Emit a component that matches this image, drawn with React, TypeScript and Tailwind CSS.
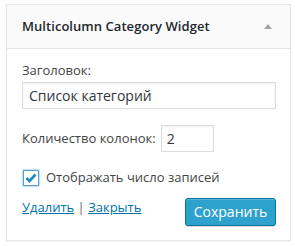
export default function App() {
  return (
    <div className="w-[295px] h-[246px] bg-white pt-[4px] pl-[6px]" style={{ fontFamily: '"Open Sans", sans-serif' }}>
      <div className="w-[285px] h-[237px] border border-[#e5e5e5] bg-white shadow-[0_1px_1px_rgba(0,0,0,0.04)] flex flex-col">
        <div className="h-[44px] bg-[#fafafa] border-b border-[#e5e5e5] flex items-center justify-between pl-[15px] pr-[18px]">
          <span className="text-[13px] font-semibold text-[#23282d] tracking-[0.05px]">Multicolumn Category Widget</span>
          <svg width="8" height="5" viewBox="0 0 8 5"><polygon points="4,0 8,5 0,5" fill="#a0a5aa" /></svg>
        </div>
        <div className="px-[15px] pt-[12px] text-[13px] text-[#444] flex flex-col">
          <label className="leading-[18px]">Заголовок:</label>
          <div className="mt-[3px] w-[254px] h-[27px] border border-[#ddd] shadow-[inset_0_1px_2px_rgba(0,0,0,0.07)] flex items-center px-[6px] text-[14px] text-[#32373c]">Список категорий</div>
          <div className="mt-[16px] flex items-center gap-[5px]">
            <span>Количество колонок:</span>
            <div className="w-[53px] h-[27px] border border-[#ddd] shadow-[inset_0_1px_2px_rgba(0,0,0,0.07)] flex items-center px-[5px] text-[14px] text-[#32373c]">2</div>
          </div>
          <div className="mt-[16px] flex items-center gap-[7px]">
            <div className="w-[16px] h-[16px] border border-[#5b9dd9] shadow-[0_0_2px_rgba(30,140,190,0.8)] flex items-center justify-center ml-[1px]">
              <svg width="12" height="10" viewBox="0 0 12 10"><path d="M1.5 5 L4.5 8 L10.5 1.5" stroke="#1e8cbe" strokeWidth="2.6" fill="none" /></svg>
            </div>
            <span>Отображать число записей</span>
          </div>
          <div className="mt-[9px] flex items-start justify-between">
            <div className="leading-[18px] whitespace-pre mt-[1px]">
              <a className="text-[#0073aa] underline">Удалить</a>
              <span className="text-[#666]"> | </span>
              <a className="text-[#0073aa] underline">Закрыть</a>
            </div>
            <button className="mt-[1px] w-[91px] h-[28px] rounded-[3px] bg-[#2ea2cc] border border-[#0074a2] shadow-[inset_0_1px_0_rgba(120,200,230,0.5),0_1px_0_rgba(0,0,0,0.15)] text-white text-[14px] mr-[-1px]">Сохранить</button>
          </div>
        </div>
      </div>
    </div>
  );
}
